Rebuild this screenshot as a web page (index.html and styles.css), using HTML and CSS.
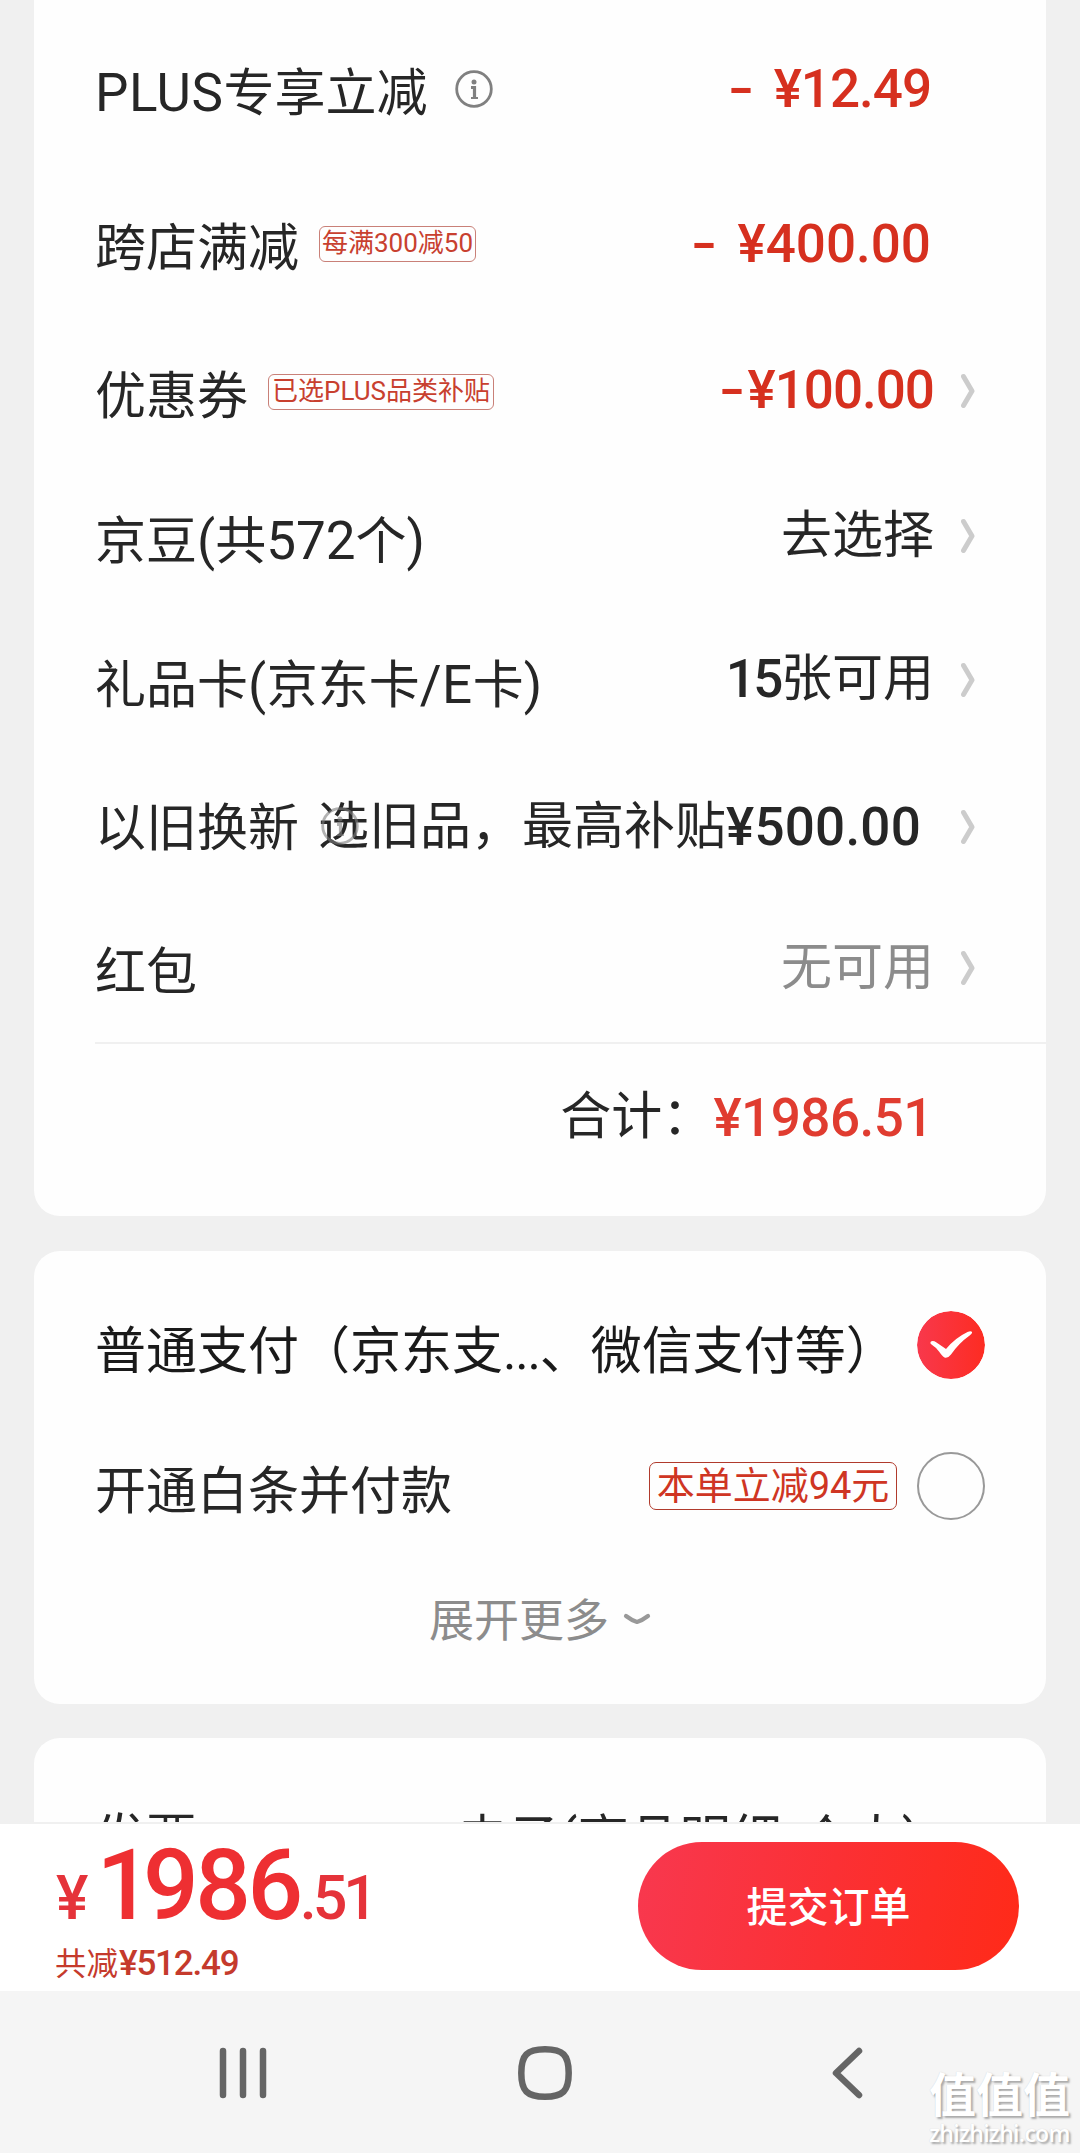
FILE: index.html
```html
<!DOCTYPE html>
<html lang="zh-CN">
<head>
<meta charset="utf-8">
<title>确认订单</title>
<link rel="stylesheet" href="styles.css">
</head>
<body>
<svg width="0" height="0" class="defs">
  <symbol id="chev" viewBox="0 0 14 36"><path d="M2.500 3.500L11 18L2.500 32.500" fill="none" stroke="#ccc" stroke-width="5" stroke-linecap="round" stroke-linejoin="round"/></symbol>
  <symbol id="info" viewBox="0 0 38 38"><circle cx="19" cy="19" r="17.300" fill="none" stroke="#808080" stroke-width="2.800"/><circle cx="19" cy="12" r="2.500" fill="#808080"/><path d="M16 17.500h3.500v10" fill="none" stroke="#808080" stroke-width="3.200"/><path d="M16 28h7" stroke="#808080" stroke-width="2"/></symbol>
</svg>
<main class="sheet">
  <section class="card discounts">
    <div class="row plus"><span class="label"><span class="latin">PLUS</span>专享立减</span><svg class="info"><use href="#info"/></svg><div class="value red"><span class="dash">-</span><span class="num">¥12.49</span></div></div>
    <div class="row cross"><span class="label">跨店满减</span><span class="tag tag-cross">每满300减50</span><div class="value red"><span class="dash">-</span><span class="num">¥400.00</span></div></div>
    <div class="row coupon"><span class="label">优惠券</span><span class="tag tag-coupon">已选PLUS品类补贴</span><div class="value red link"><span class="dash tight">-</span><span class="num">¥100.00</span><svg class="chev"><use href="#chev"/></svg></div></div>
    <div class="row beans"><span class="label">京豆<span class="latin">(</span>共<span class="latin">572</span>个<span class="latin">)</span></span><div class="value link"><span>去选择</span><svg class="chev"><use href="#chev"/></svg></div></div>
    <div class="row gift"><span class="label">礼品卡<span class="latin">(</span>京东卡<span class="latin">/E</span>卡<span class="latin">)</span></span><div class="value link"><span class="num">15</span><span>张可用</span><svg class="chev"><use href="#chev"/></svg></div></div>
    <div class="row trade"><span class="label">以旧换新</span><svg class="info under"><use href="#info"/></svg><div class="value link wide"><span>选旧品，最高补贴</span><span class="num">¥500.00</span><svg class="chev"><use href="#chev"/></svg></div></div>
    <div class="row packet"><span class="label">红包</span><div class="value link muted"><span>无可用</span><svg class="chev"><use href="#chev"/></svg></div></div>
    <div class="total"><span>合计：</span><span class="num">¥1986.51</span></div>
  </section>
  <section class="card payment">
    <div class="pay first"><span class="label">普通支付（京东支<span class="dots">...</span>、微信支付等）</span>
      <svg class="radio" viewBox="0 0 68 68"><defs><linearGradient id="g"><stop stop-color="#f8384c"/><stop offset="1" stop-color="#fd2c22"/></linearGradient></defs><circle cx="34" cy="34" r="34" fill="url(#g)"/><path d="M13.500 31Q15.500 29 19.500 31.500L29 38Q38 27 50.500 21Q54 19.500 55 21Q55.500 22.500 52 25Q42 32 34 43.500Q31 47.500 27.500 46.500Q25.500 45.500 22 40.500Q18.500 36 14.500 33.500Q13 32.500 13.500 31Z" fill="#fff"/></svg></div>
    <div class="pay second"><span class="label">开通白条并付款</span><span class="offer">本单立减94元</span><span class="radio empty"></span></div>
    <div class="more"><span>展开更多</span><svg viewBox="0 0 30 14"><path d="M4 3Q10 7.500 15 9Q20 7.500 26 3" fill="none" stroke="#999" stroke-width="4.200" stroke-linecap="round" stroke-linejoin="round"/></svg></div>
  </section>
  <section class="card invoice">
    <div class="row"><span class="label">发票</span><div class="value link wide"><span>电子<span class="latin">(</span>商品明细<span class="latin hyphen">-</span>个人<span class="latin">)</span></span><svg class="chev"><use href="#chev"/></svg></div></div>
  </section>
</main>
<footer class="bar">
  <div class="sum">
    <div class="price"><span class="yen">¥</span><span class="int"><span class="one">1</span>986</span><span class="dec">.51</span></div>
    <div class="saved">共减<span>¥512.49</span></div>
  </div>
  <button class="submit">提交订单</button>
</footer>
<nav class="nav">
  <svg class="recent" viewBox="0 0 48 52"><path d="M4 4V48M24 4V48M44 4V48"/></svg>
  <svg class="home" viewBox="0 0 56 56"><path d="M28 4.300C46 4.300 51.700 10 51.700 28S46 51.700 28 51.700S4.300 46 4.300 28S10 4.300 28 4.300Z"/></svg>
  <svg class="back" viewBox="0 0 32 52"><path d="M28 4L5 26L28 48"/></svg>
  <div class="mark"><span class="mark-name">值值值</span><span class="mark-url">zhizhizhi.com</span></div>
</nav>
</body>
</html>
```
FILE: styles.css
```css
* { box-sizing: border-box; }
body {
  margin: 0;
  width: 1080px;
  height: 2153px;
  overflow: hidden;
  background: #f0f0f0;
  color: #262626;
  font-family: Roboto, "Noto Sans CJK SC", sans-serif;
  font-size: 51px;
  line-height: 60px;
  white-space: nowrap;
}
.defs { display: block; position: absolute; }
.sheet { height: 1822px; overflow: hidden; padding: 0 34px; }
.card { background: #fefefe; border-radius: 26px; padding-left: 61px; }
.discounts { height: 1216px; border-radius: 0 0 26px 26px; padding-top: 64px; }
.row { display: flex; align-items: center; height: 60px; }
.row .value { margin-left: auto; display: flex; align-items: center; margin-right: 115px; }
.row .value.link { margin-right: 71px; }
.plus .label { margin-top: -2px; }
.cross { margin-top: 95px; }
.coupon { margin-top: 88px; }
.beans { margin-top: 84px; }
.gift { margin-top: 84px; }
.trade { margin-top: 84px; }
.packet { margin-top: 84px; }
.plus .value, .cross .value { padding-bottom: 10px; }
.coupon .value { padding-bottom: 14px; }
.beans .value { padding-bottom: 11px; }
.gift .value { padding-bottom: 12px; }
.trade .value { padding-bottom: 5px; }
.packet .value { padding-bottom: 11px; }
.latin { font-size: 53px; letter-spacing: 0.5px; }
.beans .latin { letter-spacing: 0; }
.hyphen { margin: 0 1px 0 2px; }
.red { color: #d6301f; }
.muted { color: #8c8c8c; }
.num { font-weight: 500; font-size: 53px; letter-spacing: -0.5px; }
.plus .num, .coupon .num { letter-spacing: -1px; }
.cross .num { letter-spacing: 0; }
.gift .num { letter-spacing: -2.5px; }
.trade .num { letter-spacing: 0.2px; }
.dash {
  font-weight: 500;
  font-size: 53px;
  margin-right: 24px;
  transform: scaleX(1.4);
}
.dash.tight { margin-right: 6px; }
.chev { width: 14px; height: 36px; margin-left: 27px; margin-top: 1px; }
.wide .chev { margin-left: 40px; }
.info { width: 38px; height: 38px; margin: 0 0 10px 28px; }
.info.under { opacity: .6; margin: 0 -360px 6px 22px; }
.tag {
  margin: 0 0 10px 20px;
  height: 36px;
  border: 1px solid #c98078;
  border-radius: 6px;
  color: #c8402f;
  font-size: 26px;
  line-height: 33px;
  text-align: center;
}
.tag-cross { width: 157px; }
.tag-coupon { width: 226px; }
.total {
  display: flex;
  justify-content: flex-end;
  height: 174px;
  margin-top: 39px;
  padding: 43px 113px 0 0;
  border-top: 2px solid #f0f0f0;
}
.total .num { color: #e03c30; letter-spacing: -0.5px; margin-top: 1px; }
.payment { height: 453px; margin-top: 35px; padding-right: 61px; padding-top: 60px; color: #1a1a1a; }
.pay { display: flex; align-items: center; height: 68px; }
.pay .label { margin-right: auto; padding-top: 14px; }
.second { margin-top: 73px; color: #262626; }
.second .label { padding-top: 11px; }
.dots { letter-spacing: -1.2px; }
.radio { width: 68px; height: 68px; border-radius: 50%; }
.empty { border: 2px solid #999; }
.offer {
  margin-right: 20px;
  height: 48px;
  width: 248px;
  border: 1px solid #b03a2c;
  border-radius: 7px;
  color: #cf3523;
  font-size: 38px;
  line-height: 46px;
  text-align: center;
}
.more { display: flex; align-items: center; margin: 72px 0 0 334px; color: #8c8c8c; font-size: 45px; }
.more svg { width: 30px; height: 14px; margin-left: 13px; margin-bottom: 4px; }
.invoice { height: 200px; margin-top: 34px; padding-top: 71px; }
.bar {
  height: 169px;
  border-top: 2px solid #f0f0f0;
  background: #fff;
  display: flex;
  justify-content: space-between;
  padding: 18px 61px 0 55px;
}
.price { display: flex; align-items: baseline; height: 92px; line-height: 88px; color: #e5333a; font-weight: 500; }
.yen, .dec { font-size: 61px; }
.yen { margin-right: 8px; margin-left: 1px; }
.int { font-size: 98px; font-weight: 500; letter-spacing: -3.500px; color: #ee2f32; }
.one { letter-spacing: -9px; }
.dec { letter-spacing: -4px; }
.saved { font-size: 31.500px; line-height: 40px; margin-top: 10px; color: #c53a2c; }
.saved span { font-size: 35px; font-weight: 500; letter-spacing: -1.200px; margin-left: 1px; }
.submit {
  width: 381px;
  height: 128px;
  border: 0;
  border-radius: 64px;
  background: linear-gradient(100deg, #f8384f, #fb3034 50%, #ff2a18);
  color: #fff;
  font: 500 41px/1 Roboto, "Noto Sans CJK SC", sans-serif;
  padding: 4px 0 0;
}
.nav { height: 162px; background: #f5f5f5; display: flex; align-items: flex-start; padding: 55px 9px 0 219px; }
.nav svg { fill: none; stroke: #656565; stroke-width: 6.500; stroke-linecap: round; stroke-linejoin: round; }
.recent { width: 48px; height: 52px; margin-top: 1px; }
.home { width: 56px; height: 56px; margin-left: 250px; margin-top: -1px; }
.back { width: 32px; height: 52px; margin-left: 258px; margin-top: 1px; }
.mark {
  margin: 25px 0 0 auto;
  width: 142px;
  display: flex;
  flex-direction: column;
  color: #fff;
  text-shadow: 2px 2px 2px #aaa, 0 0 1px #ccc;
  font-weight: 700;
}
.mark-name { font-size: 47px; line-height: 50px; }
.mark-url { font: 600 23px/24px "Open Sans", sans-serif; letter-spacing: -0.700px; }
```
